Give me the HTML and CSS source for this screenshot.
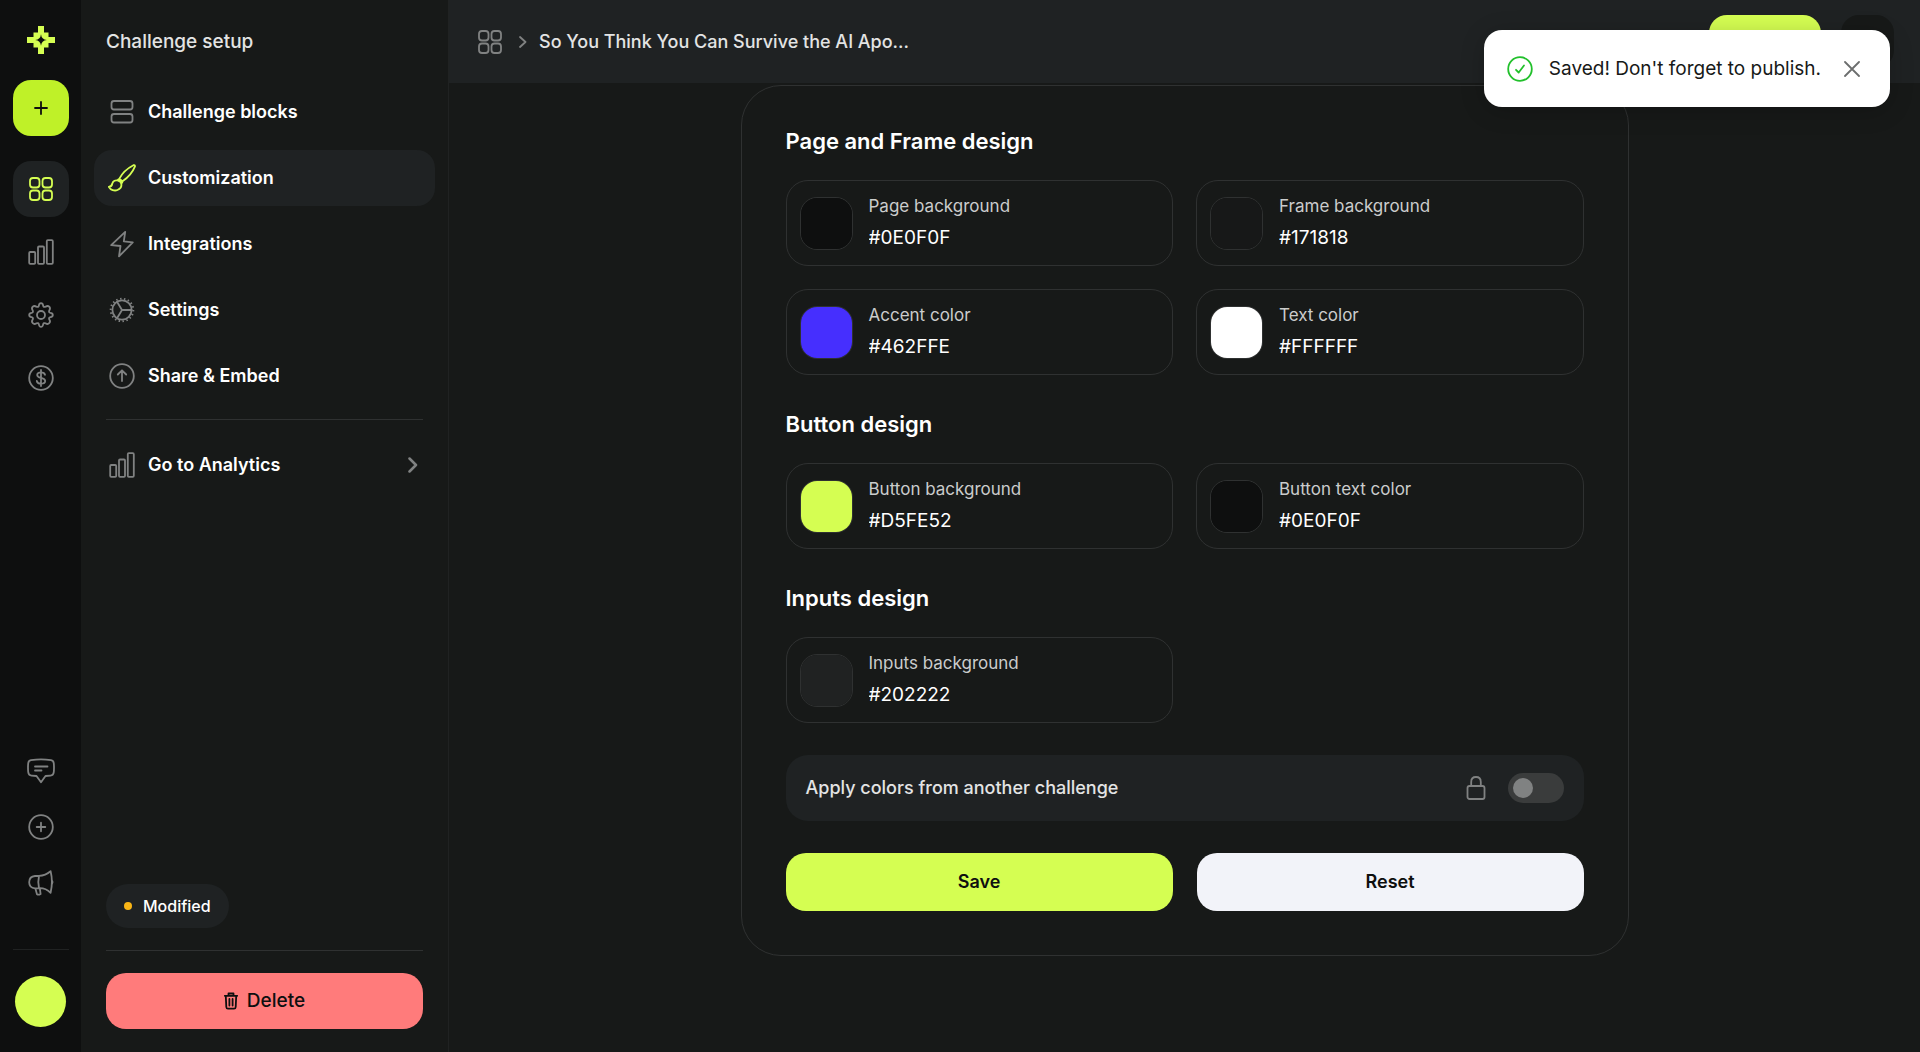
FILE: index.html
```html
<!DOCTYPE html>
<html lang="en">
<head>
    <meta charset="UTF-8">
    <meta name="viewport" content="width=device-width, initial-scale=1.0">
    <title>Customization</title>
    <link rel="stylesheet" href="styles.css">
</head>
<body>
    <!-- shared icons -->
    <svg class="sprite" aria-hidden="true">
        <symbol id="grid" viewBox="0 0 28 28">
            <rect x="3" y="3" width="9.500" height="9.500" rx="3"/>
            <rect x="15.500" y="3" width="9.500" height="9.500" rx="3"/>
            <rect x="3" y="15.500" width="9.500" height="9.500" rx="3"/>
            <rect x="15.500" y="15.500" width="9.500" height="9.500" rx="3"/>
        </symbol>
        <symbol id="bars" viewBox="0 0 28 28">
            <rect x="2.200" y="14" width="6" height="11.800" rx="1"/>
            <rect x="11" y="8.500" width="6" height="17.300" rx="1"/>
            <rect x="19.800" y="2.200" width="6" height="23.600" rx="1"/>
        </symbol>
    </svg>

    <div class="app">
        <aside class="rail">
            <a href="#" class="logo" aria-label="Home">
                <svg width="28" height="28" viewBox="0 0 28 28">
                    <path fill="#d5fe52" fill-rule="evenodd" d="M11 0h6v6.500h4.500V11H28v6h-6.500v4.500H17V28h-6v-6.500H6.500V17H0v-6h6.500V6.500H11zM14 8.200Q14.500 13.500 19.800 14Q14.500 14.500 14 19.800Q13.500 14.500 8.200 14Q13.500 13.500 14 8.200z"/>
                </svg>
            </a>
            <button class="rail-btn add" aria-label="New challenge">
                <svg class="icon" viewBox="0 0 28 28"><path d="M14 8v12M8 14h12"/></svg>
            </button>
            <nav class="rail-nav">
                <a href="#" class="rail-btn active" aria-label="Challenges"><svg class="icon"><use href="#grid"/></svg></a>
                <a href="#" class="rail-btn" aria-label="Analytics"><svg class="icon"><use href="#bars"/></svg></a>
                <a href="#" class="rail-btn" aria-label="Settings">
                    <svg class="icon" viewBox="0 0 28 28">
                        <circle cx="14" cy="14" r="4"/>
                        <path d="M11.900 4.500Q12.200 2.200 14 2.200Q15.800 2.200 16.100 4.500Q16.500 6.600 18.600 5.700Q20.700 4.200 22.200 5.700Q23.800 7.300 22.300 9.400Q21.400 11.500 23.500 11.900Q25.800 12.200 25.800 14Q25.800 15.800 23.500 16.100Q21.400 16.500 22.300 18.600Q23.800 20.700 22.200 22.200Q20.700 23.800 18.600 22.300Q16.500 21.400 16.100 23.500Q15.800 25.800 14 25.800Q12.200 25.800 11.900 23.500Q11.500 21.400 9.400 22.300Q7.300 23.800 5.800 22.200Q4.200 20.700 5.700 18.600Q6.600 16.500 4.500 16.100Q2.200 15.800 2.200 14Q2.200 12.200 4.500 11.900Q6.600 11.500 5.700 9.400Q4.200 7.300 5.800 5.700Q7.300 4.200 9.400 5.700Q11.500 6.600 11.900 4.500z"/>
                    </svg>
                </a>
                <a href="#" class="rail-btn" aria-label="Billing">
                    <svg class="icon" viewBox="0 0 28 28">
                        <circle cx="14" cy="14" r="11.800"/>
                        <path d="M18 10.800C17.600 9 16 8.300 14 8.300C11.600 8.300 10.200 9.400 10.200 11C10.200 15 18.200 12.800 18.200 17C18.200 18.700 16.500 19.700 14 19.700C11.700 19.700 10.100 18.800 9.800 17M14 6v16"/>
                    </svg>
                </a>
            </nav>
            <nav class="rail-nav rail-bottom">
                <a href="#" class="rail-btn" aria-label="Feedback">
                    <svg class="icon" viewBox="0 0 28 28">
                        <path d="M4 3.200Q14 1.400 24 3.200Q26.600 3.700 26.800 6.500Q27.200 10.500 26.800 15Q26.500 18.300 23.500 18.600L18.500 19L14 25.300L9.500 19L4.500 18.600Q1.500 18.300 1.200 15Q.8 10.500 1.200 6.500Q1.400 3.700 4 3.200zM8 9.500h12.500M8 13.500h6.500"/>
                    </svg>
                </a>
                <a href="#" class="rail-btn" aria-label="Help">
                    <svg class="icon" viewBox="0 0 28 28"><circle cx="14" cy="14" r="11.800"/><path d="M14 9.700v8.600M9.700 14h8.600"/></svg>
                </a>
                <a href="#" class="rail-btn" aria-label="News">
                    <svg class="icon" viewBox="0 0 28 28">
                        <path d="M12 6.800Q18.500 6.500 23.600 2.200Q26.200 12.500 23.600 23.800Q18.500 18.800 12 19.200L8 19.300Q2.200 19 2.200 13.300Q2.200 7.500 8 7zM12 6.800Q10.600 13 12 19.200M25 11.500Q26.200 13 25 15M8.300 19.300L10 25.200Q11.500 26.300 13.600 25L12.800 19.200"/>
                    </svg>
                </a>
            </nav>
            <button class="avatar" aria-label="Account"></button>
        </aside>

        <aside class="sidebar">
            <h1 class="sidebar-title">Challenge setup</h1>
            <nav class="menu">
                <a href="#" class="menu-item">
                    <svg class="icon" viewBox="0 0 28 28"><rect x="3.500" y="3" width="21" height="8.500" rx="2.500"/><rect x="3.500" y="16" width="21" height="8.500" rx="2.500"/></svg>
                    Challenge blocks
                </a>
                <a href="#" class="menu-item active">
                    <svg class="icon" viewBox="0 0 28 28">
                        <path d="M11.200 14.800C14 9.500 19 4.500 25.400 1.200Q27 .6 27 2.400C24.500 8.500 20 13.600 14.500 17.300zM11.200 14.800Q9.800 15.200 9.800 16.500Q12.800 17 13.200 19.500Q14.600 19 14.500 17.300M9.800 16.500C7.500 15.800 5 17 4.300 19.500C4 21.500 3 22.600 .8 22.800C2.500 26 6.500 27.300 9.500 26C12.500 24.800 13.800 22 13.200 19.500"/>
                    </svg>
                    Customization
                </a>
                <a href="#" class="menu-item">
                    <svg class="icon" viewBox="0 0 28 28"><path d="M17.200 1.800L3.200 15.200L12.500 16L11 26.400L24.800 12.300L15.800 11.400z"/></svg>
                    Integrations
                </a>
                <a href="#" class="menu-item">
                    <svg class="icon" viewBox="0 0 28 28">
                        <circle cx="14" cy="14" r="9.600"/>
                        <circle class="teeth" cx="14" cy="14" r="11.300" pathLength="72"/>
                        <path d="M14 14h9.600M14 14L9 5.800M14 14L9 22.200"/>
                    </svg>
                    Settings
                </a>
                <a href="#" class="menu-item">
                    <svg class="icon" viewBox="0 0 28 28"><circle cx="14" cy="14" r="11.800"/><path d="M14 19v-10.500M9.800 12.500L14 8.300L18.200 12.500"/></svg>
                    Share &amp; Embed
                </a>
            </nav>
            <div class="menu menu-extra">
                <a href="#" class="menu-item">
                    <svg class="icon"><use href="#bars"/></svg>
                    Go to Analytics
                    <svg class="chevron" width="10" height="16" viewBox="0 0 10 16"><path d="M1.500 1.500L8 8L1.500 14.500"/></svg>
                </a>
            </div>
            <div class="status"><span class="dot"></span>Modified</div>
            <div class="sidebar-footer">
                <button class="btn btn-delete">
                    <svg width="14" height="18" viewBox="0 0 14 18"><path d="M.8 3.800h12.400M4.500 3.500V1.500h5v2M1.800 4.200l.5 10.800Q2.400 16.700 4 16.700h6q1.600 0 1.700-1.700l.5-10.800M5.400 7v6.500M8.600 7v6.500"/></svg>
                    Delete
                </button>
            </div>
        </aside>

        <div class="content">
            <header class="topbar">
                <a href="#" class="crumb" aria-label="All challenges"><svg class="icon"><use href="#grid"/></svg></a>
                <svg class="crumb-sep" width="8" height="12" viewBox="0 0 8 12"><path d="M1 1L6.500 6L1 11"/></svg>
                <span class="crumb-title">So You Think You Can Survive the AI Apo...</span>
                <div class="topbar-actions">
                    <button class="publish" aria-label="Publish"></button>
                    <button class="more" aria-label="More"></button>
                </div>
            </header>

            <main class="main">
                <form class="card">
                    <section class="group">
                        <h2>Page and Frame design</h2>
                        <div class="fields">
                            <div class="field">
                                <input type="color" value="#0e0f0f" aria-label="Pick page background">
                                <div class="field-text">
                                    <label for="page-bg">Page background</label>
                                    <input type="text" id="page-bg" value="#0E0F0F">
                                </div>
                            </div>
                            <div class="field">
                                <input type="color" value="#171818" aria-label="Pick frame background">
                                <div class="field-text">
                                    <label for="frame-bg">Frame background</label>
                                    <input type="text" id="frame-bg" value="#171818">
                                </div>
                            </div>
                            <div class="field">
                                <input type="color" value="#462ffe" aria-label="Pick accent color">
                                <div class="field-text">
                                    <label for="accent">Accent color</label>
                                    <input type="text" id="accent" value="#462FFE">
                                </div>
                            </div>
                            <div class="field">
                                <input type="color" value="#ffffff" aria-label="Pick text color">
                                <div class="field-text">
                                    <label for="text-color">Text color</label>
                                    <input type="text" id="text-color" value="#FFFFFF">
                                </div>
                            </div>
                        </div>
                    </section>
                    <section class="group">
                        <h2>Button design</h2>
                        <div class="fields">
                            <div class="field">
                                <input type="color" value="#d5fe52" aria-label="Pick button background">
                                <div class="field-text">
                                    <label for="btn-bg">Button background</label>
                                    <input type="text" id="btn-bg" value="#D5FE52">
                                </div>
                            </div>
                            <div class="field">
                                <input type="color" value="#0e0f0f" aria-label="Pick button text color">
                                <div class="field-text">
                                    <label for="btn-text">Button text color</label>
                                    <input type="text" id="btn-text" value="#0E0F0F">
                                </div>
                            </div>
                        </div>
                    </section>
                    <section class="group">
                        <h2>Inputs design</h2>
                        <div class="fields">
                            <div class="field">
                                <input type="color" value="#202222" aria-label="Pick inputs background">
                                <div class="field-text">
                                    <label for="inputs-bg">Inputs background</label>
                                    <input type="text" id="inputs-bg" value="#202222">
                                </div>
                            </div>
                        </div>
                    </section>
                    <div class="apply">
                        <label for="apply">Apply colors from another challenge</label>
                        <svg class="icon" viewBox="0 0 28 28"><rect x="5.500" y="12" width="17" height="13" rx="2"/><path d="M9.200 12V8Q9.200 3 14 3Q18.800 3 18.800 8v4"/></svg>
                        <input type="checkbox" id="apply" class="switch">
                    </div>
                    <div class="actions">
                        <button type="button" class="btn btn-save">Save</button>
                        <button type="reset" class="btn btn-reset">Reset</button>
                    </div>
                </form>
            </main>
        </div>
    </div>

    <div class="toast" role="status">
        <svg class="icon" viewBox="0 0 28 28"><circle cx="14" cy="14" r="11.800"/><path d="M10 14.800L12.700 17.500L18 10.500"/></svg>
        <span>Saved! Don't forget to publish.</span>
        <button class="toast-close" aria-label="Close"><svg width="16" height="16" viewBox="0 0 16 16"><path d="M1 1l14 14M15 1L1 15"/></svg></button>
    </div>
</body>
</html>
```

FILE: styles.css
```css
* {
    box-sizing: border-box;
}
body {
    margin: 0;
    background-color: #171918;
    color: #fff;
    font-family: Inter, "Liberation Sans", sans-serif;
    font-size: 18px;
    line-height: 24px;
}
a {
    color: inherit;
    text-decoration: none;
}
button, input {
    font: inherit;
    color: inherit;
    border: none;
    padding: 0;
    margin: 0;
}
button {
    cursor: pointer;
}
svg {
    display: block;
    flex: none;
    fill: none;
    stroke: currentColor;
    stroke-width: 1.8;
    stroke-linecap: round;
    stroke-linejoin: round;
}
.sprite {
    position: absolute;
    width: 0;
    height: 0;
}
.icon {
    width: 28px;
    height: 28px;
    color: #808282;
}
.app {
    display: flex;
    min-height: 100vh;
}

/* left rail */
.rail {
    width: 81px;
    flex: none;
    display: flex;
    flex-direction: column;
    align-items: center;
    padding: 26px 12px 25px;
    background-color: #0e0f0f;
}
.logo svg {
    stroke: none;
}
.rail-btn {
    width: 56px;
    height: 56px;
    display: flex;
    align-items: center;
    justify-content: center;
    border-radius: 18px;
}
.rail-btn.active {
    background-color: #1f2223;
}
.rail-btn.active .icon {
    color: #d5fe52;
}
.add {
    margin: 26px 0 25px;
    background-color: #bff128;
}
.add .icon {
    color: #0e0f0f;
}
.rail-nav {
    display: flex;
    flex-direction: column;
    gap: 7px;
}
.rail-bottom {
    gap: 0;
    margin-top: auto;
    padding-bottom: 38px;
    border-bottom: 1px solid #202222;
}
.avatar {
    width: 51px;
    height: 51px;
    margin-top: 26px;
    border-radius: 50%;
    background-color: #d5fe52;
}

/* setup menu */
.sidebar {
    width: 368px;
    flex: none;
    display: flex;
    flex-direction: column;
    padding: 30px 13px 23px;
    border-right: 1px solid #202222;
}
.sidebar-title {
    margin: 0 12px;
    font-size: 19px;
    font-weight: 500;
    color: #e3e4e4;
}
.menu {
    display: flex;
    flex-direction: column;
    gap: 10px;
    margin-top: 30px;
}
.menu-item {
    height: 56px;
    display: flex;
    align-items: center;
    gap: 12px;
    padding: 0 14px;
    border-radius: 18px;
    font-weight: 600;
}
.menu-item.active {
    background-color: #1f2223;
}
.menu-item.active .icon {
    color: #d5fe52;
}
.teeth {
    stroke-width: 2;
    stroke-linecap: butt;
    stroke-dasharray: 1.5 2.5;
}
.menu-extra {
    margin: 15px 0 0;
}
.menu-extra::before {
    content: "";
    height: 1px;
    margin: 0 12px 7px;
    background-color: #2f3131;
}
.chevron {
    margin-left: auto;
    margin-right: 3px;
    stroke: #808282;
    stroke-width: 2.5;
}
.status {
    height: 44px;
    display: flex;
    align-items: center;
    align-self: flex-start;
    gap: 11px;
    margin: auto 12px 22px;
    padding: 0 18px;
    border-radius: 22px;
    background-color: #1f2223;
    font-size: 16px;
    font-weight: 500;
}
.dot {
    width: 8px;
    height: 8px;
    border-radius: 50%;
    background-color: #f9b516;
}
.sidebar-footer {
    margin: 0 12px;
    padding-top: 22px;
    border-top: 1px solid #2f3131;
}
.btn {
    width: 100%;
    height: 58px;
    display: flex;
    align-items: center;
    justify-content: center;
    gap: 9px;
    border-radius: 20px;
    color: #0e0f0f;
    font-weight: 600;
}
.btn-delete {
    height: 56px;
    background-color: #ff7b7b;
    font-size: 19px;
    font-weight: 500;
}

/* top bar */
.content {
    flex: 1;
    min-width: 0;
}
.topbar {
    height: 83px;
    display: flex;
    align-items: center;
    padding: 0 26px 0 27px;
    background-color: #1f2223;
}
.crumb-sep {
    margin: 0 12px 0 15px;
    color: #808282;
}
.crumb-title {
    font-weight: 500;
    color: #e3e4e4;
}
.topbar-actions {
    display: flex;
    gap: 20px;
    margin-left: auto;
}
.publish {
    width: 112px;
    height: 53px;
    border-radius: 18px;
    background-color: #d5fe52;
}
.more {
    width: 53px;
    height: 53px;
    border-radius: 18px;
    background-color: #171918;
}

/* design form */
.main {
    padding: 2px 24px 24px;
}
.card {
    max-width: 888px;
    margin: 0 auto;
    padding: 40px 44px 44px;
    border: 1px solid #2f3131;
    border-radius: 40px;
}
.group {
    margin-bottom: 34px;
}
.group h2 {
    margin: 0 0 24px;
    font-size: 22px;
    font-weight: 600;
    line-height: 30px;
}
.fields {
    display: grid;
    grid-template-columns: 1fr 1fr;
    gap: 23px;
}
.field {
    height: 86px;
    display: flex;
    align-items: center;
    gap: 16px;
    padding: 0 13px;
    border: 1px solid #2f3131;
    border-radius: 22px;
}
.field input[type="color"] {
    appearance: none;
    width: 53px;
    height: 53px;
    flex: none;
    border: 1px solid #2f3131;
    border-radius: 17px;
    background: none;
    overflow: hidden;
    cursor: pointer;
}
.field input::-webkit-color-swatch-wrapper {
    padding: 0;
}
.field input::-webkit-color-swatch {
    border: none;
}
.field-text {
    flex: 1;
    min-width: 0;
    display: flex;
    flex-direction: column;
    gap: 8px;
    padding-bottom: 2px;
}
.field-text label {
    font-size: 17px;
    color: #cbcccc;
}
.field-text input {
    width: 100%;
    height: 24px;
    background: none;
    outline: none;
    font-size: 19px;
}
.apply {
    height: 66px;
    display: flex;
    align-items: center;
    gap: 18px;
    margin: -2px 0 32px;
    padding: 0 20px;
    border-radius: 22px;
    background-color: #1f2223;
    font-weight: 500;
    color: #e3e4e4;
}
.apply label {
    flex: 1;
}
.switch {
    appearance: none;
    width: 56px;
    height: 30px;
    display: flex;
    align-items: center;
    padding: 0 5px;
    border-radius: 15px;
    background-color: #3a3c3c;
    cursor: pointer;
}
.switch::before {
    content: "";
    width: 20px;
    height: 20px;
    border-radius: 50%;
    background-color: #808282;
}
.switch:checked {
    justify-content: flex-end;
}
.actions {
    display: grid;
    grid-template-columns: 1fr 1fr;
    gap: 24px;
}
.btn-save {
    background-color: #d5fe52;
}
.btn-reset {
    background-color: #f2f3f9;
}

/* notification */
.toast {
    position: absolute;
    top: 30px;
    right: 30px;
    height: 77px;
    display: flex;
    align-items: center;
    padding: 0 30px 0 22px;
    border-radius: 18px;
    background-color: #fff;
    color: #171918;
    font-size: 19px;
    box-shadow: 0 4px 24px rgba(0, 0, 0, 0.2);
}
.toast .icon {
    margin-right: 15px;
    color: #22c02c;
}
.toast-close {
    margin-left: 23px;
    background: none;
    color: #6c6e6e;
}
```
